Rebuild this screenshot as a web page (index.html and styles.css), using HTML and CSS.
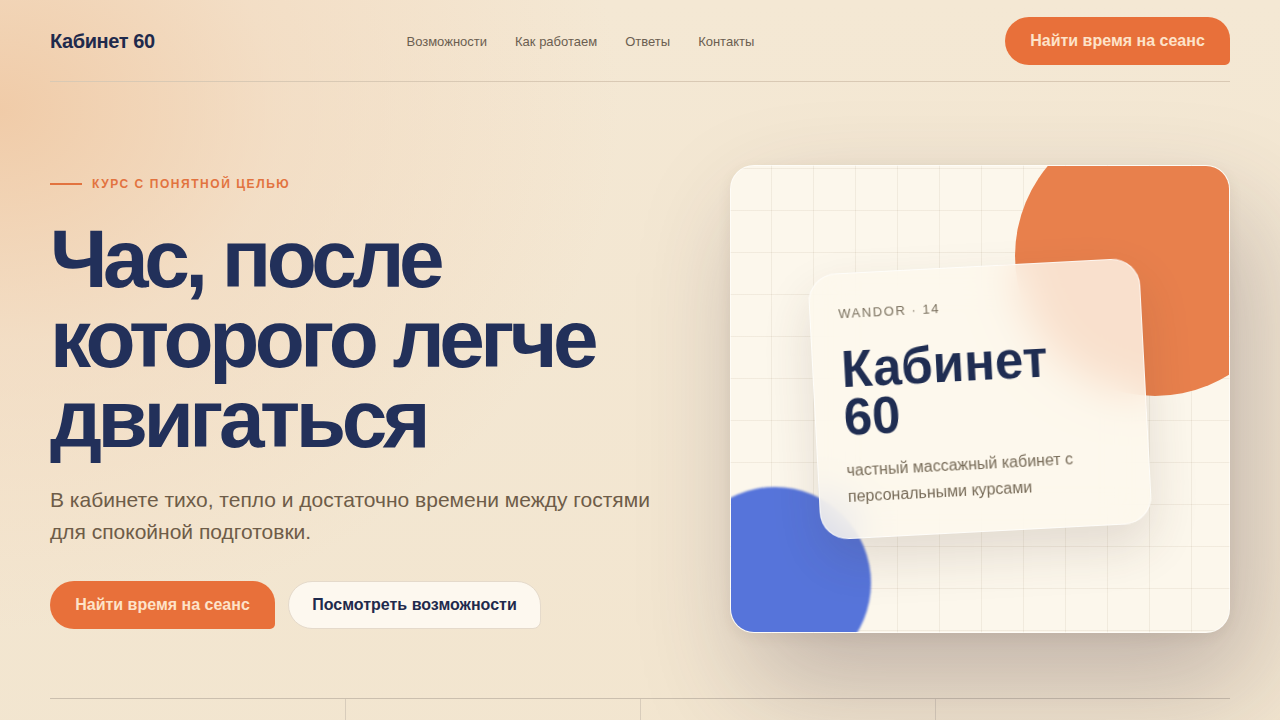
FILE: index.html
```html
<!DOCTYPE html>
<html lang="ru">
<head>
<meta charset="utf-8">
<title>Кабинет 60</title>
<link rel="stylesheet" href="styles.css">
</head>
<body>
<div class="page">
  <header class="header">
    <a class="logo" href="#">Кабинет 60</a>
    <nav class="nav">
      <a href="#">Возможности</a>
      <a href="#">Как работаем</a>
      <a href="#">Ответы</a>
      <a href="#">Контакты</a>
    </nav>
    <a class="btn btn-primary" href="#">Найти время на сеанс</a>
  </header>

  <section class="hero">
    <div class="hero-text">
      <div class="eyebrow"><span class="eyebrow-line"></span>Курс с понятной целью</div>
      <h1 class="title">Час, после которого легче двигаться</h1>
      <p class="lead">В кабинете тихо, тепло и достаточно времени между гостями для спокойной подготовки.</p>
      <div class="actions">
        <a class="btn btn-primary" href="#">Найти время на сеанс</a>
        <a class="btn btn-secondary" href="#">Посмотреть возможности</a>
      </div>
    </div>
    <div class="visual">
      <div class="blob blob-orange"></div>
      <div class="blob blob-blue"></div>
      <div class="glass">
        <div class="glass-meta">WANDOR · 14</div>
        <div class="glass-title">Кабинет 60</div>
        <div class="glass-sub">частный массажный кабинет с персональными курсами</div>
      </div>
    </div>
  </section>

  <section class="stats">
    <div class="stat"></div>
    <div class="stat"></div>
    <div class="stat"></div>
    <div class="stat"></div>
  </section>
</div>
</body>
</html>
```

FILE: styles.css
```css
* { box-sizing: border-box; }

html, body {
  margin: 0;
  padding: 0;
}

body {
  font-family: "Liberation Sans", Arial, sans-serif;
  color: #1f2d55;
  background:
    radial-gradient(ellipse 620px 520px at 0px 110px, rgba(240, 202, 166, 0.95) 0%, rgba(242, 214, 186, 0.55) 45%, rgba(243, 230, 210, 0) 100%),
    linear-gradient(180deg, #f4e8d4 0%, #f2e5cf 100%);
  min-height: 100vh;
  overflow-x: hidden;
}

a { text-decoration: none; color: inherit; }

.page {
  width: 1180px;
  margin: 0 auto;
}

/* Header */
.header {
  display: flex;
  align-items: center;
  justify-content: space-between;
  padding: 17px 0 16px;
  border-bottom: 1px solid #d9c9b4;
}

.logo {
  font-size: 20px;
  font-weight: 700;
  letter-spacing: -0.02em;
  color: #1f2a4c;
}

.nav {
  display: flex;
  gap: 28px;
  padding-left: 1px;
}

.nav a {
  font-size: 13px;
  color: #6b5e50;
}

.btn {
  display: inline-flex;
  align-items: center;
  justify-content: center;
  height: 48px;
  padding: 0 20px;
  font-size: 16px;
  font-weight: 700;
  border-radius: 24px 22px 5px 24px;
}

.btn-primary {
  background: #e8703a;
  color: #fde3c9;
  width: 225px;
}

.btn-secondary {
  background: #fdf8ef;
  color: #1f2a4c;
  border: 1px solid #e5dacb;
  border-radius: 24px 24px 8px 24px;
  width: 253px;
}

/* Hero */
.hero {
  display: grid;
  grid-template-columns: 1fr 500px;
  column-gap: 68px;
  align-items: center;
  padding: 83px 0 65px;
}

.hero-text {
  padding-top: 7px;
}

.eyebrow {
  display: flex;
  align-items: center;
  gap: 10px;
  font-size: 12px;
  line-height: 16px;
  font-weight: 700;
  letter-spacing: 0.13em;
  text-transform: uppercase;
  color: #e2733f;
}

.eyebrow-line {
  width: 32px;
  height: 2px;
  background: #e2733f;
}

.title {
  margin: 27px 0 0;
  font-size: 82px;
  line-height: 80px;
  font-weight: 700;
  letter-spacing: -0.055em;
  color: #22305a;
}

.lead {
  margin: 25px 0 0;
  max-width: 612px;
  font-size: 21px;
  line-height: 32px;
  color: #6e5c48;
}

.actions {
  display: flex;
  gap: 13px;
  margin-top: 33px;
}

/* Visual */
.visual {
  position: relative;
  height: 468px;
  border-radius: 24px;
  overflow: hidden;
  background-color: #fcf7ec;
  background-image:
    linear-gradient(to right, rgba(150, 125, 95, 0.1) 1px, transparent 1px),
    linear-gradient(to bottom, rgba(150, 125, 95, 0.1) 1px, transparent 1px);
  background-size: 42px 42px;
  background-position: -2px 2px;
  border: 1px solid rgba(255, 255, 255, 0.6);
  box-shadow: 20px 50px 110px rgba(60, 45, 70, 0.28), 0 4px 14px rgba(90, 60, 40, 0.08);
  display: flex;
  align-items: center;
  justify-content: center;
}

.blob {
  position: absolute;
  border-radius: 50%;
}

.blob-orange {
  width: 280px;
  height: 280px;
  right: -66px;
  top: -50px;
  background: #e8804c;
}

.blob-blue {
  width: 192px;
  height: 192px;
  left: -52px;
  top: 321px;
  background: #5674da;
  filter: blur(1px);
}

.glass {
  position: relative;
  width: 332px;
  padding: 32px 30px 28px 28px;
  border-radius: 28px;
  background: rgba(253, 248, 236, 0.8);
  backdrop-filter: blur(22px);
  -webkit-backdrop-filter: blur(22px);
  border: 1px solid rgba(255, 255, 255, 0.7);
  box-shadow: 0 22px 50px rgba(70, 50, 40, 0.14);
  transform: rotate(-3deg);
}

.glass-meta {
  font-size: 13px;
  line-height: 16px;
  letter-spacing: 0.12em;
  color: #7b715f;
}

.glass-title {
  margin-top: 24px;
  max-width: 240px;
  font-size: 51px;
  line-height: 48px;
  font-weight: 700;
  color: #1f2d52;
}

.glass-sub {
  margin-top: 16px;
  font-size: 16px;
  line-height: 26px;
  color: #776b58;
}

/* Stats strip */
.stats {
  display: grid;
  grid-template-columns: repeat(4, 1fr);
  border-top: 1px solid #cbbfae;
}

.stat {
  min-height: 120px;
  border-left: 1px solid #d8ccbb;
}

.stat:first-child { border-left: none; }
```
